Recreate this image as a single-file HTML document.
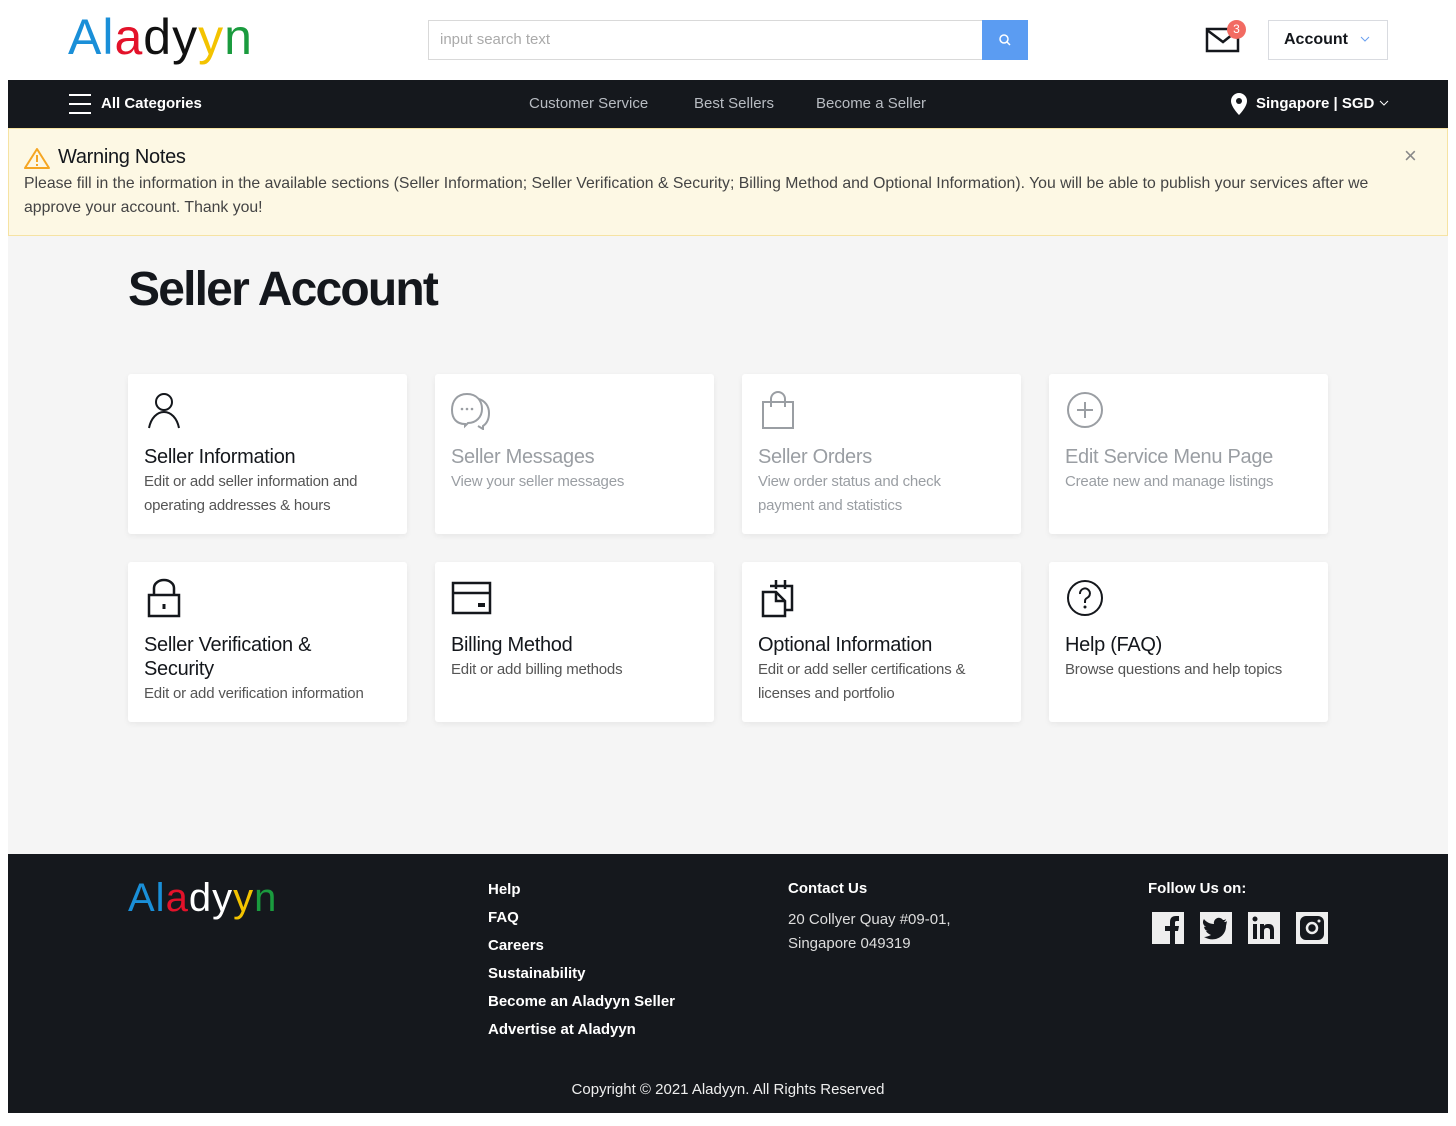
<!DOCTYPE html>
<html><head><meta charset="utf-8"><style>
*{box-sizing:border-box;margin:0;padding:0}
body{width:1456px;height:1126px;background:#fff;font-family:"Liberation Sans",sans-serif;color:#14171c;position:relative;overflow:hidden}
.abs{position:absolute}
.logo{font-size:50px;letter-spacing:1px;font-weight:400}
.hdr{left:8px;top:80px;width:1440px;height:48px;background:#15181d;color:#fff}
.main{left:8px;top:128px;width:1440px;height:726px;background:#f5f5f5}
.warn{left:8px;top:128px;width:1440px;height:108px;background:#fdf8e4;border:1px solid #f6e3a3}
.card{position:absolute;width:279px;height:160px;background:#fff;border-radius:3px;box-shadow:0 2px 6px rgba(0,0,0,.06)}
.card svg{position:absolute;left:16px;top:16px}
.card h3{position:absolute;left:16px;top:71px;font-size:20px;font-weight:400;letter-spacing:-.3px;line-height:24px}
.card p{position:absolute;left:16px;font-size:15px;line-height:24px;color:#555;letter-spacing:-.2px}
.dis h3,.dis p{color:#9a9ea3}
.foot{left:8px;top:854px;width:1440px;height:259px;background:#15181d;color:#fff}
.foot a{display:block;color:#fff;font-size:15px;font-weight:700;line-height:28px}
.soc{display:inline-block;width:32px;height:32px;background:#eee;margin-right:16px;position:relative}
</style></head><body>
<div class="abs logo" style="left:68px;top:8px"><span style="color:#1a8fd8">Al</span><span style="color:#e3122a">a</span><span style="color:#111">dy</span><span style="color:#f3c300">y</span><span style="color:#1a9b3e">n</span></div>
<div class="abs" style="left:428px;top:20px;width:555px;height:40px;border:1px solid #d9d9d9;font-size:15px;color:#aaa;padding:10px 11px">input search text</div>
<div class="abs" style="left:982px;top:20px;width:46px;height:40px;background:#5b9cf2"><svg width="46" height="40"><circle cx="22" cy="19" r="4" fill="none" stroke="#fff" stroke-width="1.5"/><path d="M25 22l3 3" stroke="#fff" stroke-width="1.5"/></svg></div>
<svg class="abs" style="left:1205px;top:26px" width="36" height="28"><rect x="2" y="3" width="31" height="22" fill="none" stroke="#14171c" stroke-width="2.5"/><path d="M2 4l16 12 15-12" fill="none" stroke="#14171c" stroke-width="2.5"/></svg>
<div class="abs" style="left:1227px;top:20px;width:19px;height:19px;border-radius:50%;background:#f26b62;color:#fff;font-size:12px;text-align:center;line-height:19px">3</div>
<div class="abs" style="left:1268px;top:20px;width:120px;height:40px;border:1px solid #d9dbe0;font-size:16px;font-weight:700;padding:10px 15px;white-space:nowrap">Account <svg style="margin-left:8px;vertical-align:2px" width="10" height="6"><path d="M1 1l4 4 4-4" fill="none" stroke="#6aa0f0" stroke-width="1"/></svg></div>
<div class="abs hdr">
 <svg class="abs" style="left:60px;top:13px" width="24" height="22"><path d="M1 2h22M1 11h22M1 20h22" stroke="#fff" stroke-width="2"/></svg>
 <div class="abs" style="left:93px;top:15px;font-size:15px;font-weight:700">All Categories</div>
 <div class="abs" style="left:521px;top:15px;font-size:15px;color:#b8bcc2">Customer Service</div>
 <div class="abs" style="left:686px;top:15px;font-size:15px;color:#b8bcc2">Best Sellers</div>
 <div class="abs" style="left:808px;top:15px;font-size:15px;color:#b8bcc2">Become a Seller</div>
 <svg class="abs" style="left:1222px;top:12px" width="18" height="24"><path d="M9 1a8 8 0 0 0-8 8c0 6 8 14 8 14s8-8 8-14a8 8 0 0 0-8-8z" fill="#fff"/><circle cx="9" cy="9" r="3" fill="#15181d"/></svg>
 <div class="abs" style="left:1248px;top:15px;font-size:15px;font-weight:700;white-space:nowrap">Singapore | SGD <svg style="vertical-align:2px" width="10" height="6"><path d="M1 1l4 4 4-4" fill="none" stroke="#fff" stroke-width="1"/></svg></div>
</div>
<div class="abs main"></div>
<div class="abs warn">
 <svg class="abs" style="left:15px;top:18px" width="26" height="22"><path d="M13 2L1 21h24z" fill="none" stroke="#f5a623" stroke-width="2" stroke-linejoin="round"/><path d="M13 8v7M13 17v2" stroke="#f5a623" stroke-width="2"/></svg>
 <div class="abs" style="left:49px;top:17px;font-size:20px;letter-spacing:-.3px">Warning Notes</div>
 <div class="abs" style="left:15px;top:43px;font-size:15.8px;line-height:24px;color:#444;white-space:nowrap">Please fill in the information in the available sections (Seller Information; Seller Verification &amp; Security; Billing Method and Optional Information). You will be able to publish your services after we<br>approve your account. Thank you!</div>
 <div class="abs" style="left:1395px;top:14px;font-size:22px;color:#888">&#215;</div>
</div>
<div class="abs" style="left:128px;top:262px;font-size:48px;font-weight:700;letter-spacing:-1.8px">Seller Account</div>

<div class="card" style="left:128px;top:374px"><svg width="40" height="40"><circle cx="20" cy="12" r="8" fill="none" stroke="#14171c" stroke-width="2"/><path d="M5 38c2-10 8-16 15-16s13 6 15 16" fill="none" stroke="#14171c" stroke-width="2"/></svg><h3>Seller Information</h3><p style="top:96px">Edit or add seller information and<br>operating addresses &amp; hours</p></div>
<div class="card dis" style="left:435px;top:374px"><svg width="40" height="40"><path d="M14 34c-8 0-13-5-13-14S6 4 16 4s15 7 15 15-6 14-14 14l-3 3z" fill="none" stroke="#9a9ea3" stroke-width="2"/><path d="M28 9c6 2 10 7 10 14s-3 11-6 13v3l-5-3" fill="none" stroke="#9a9ea3" stroke-width="2"/><circle cx="11" cy="19" r="1.3" fill="#9a9ea3"/><circle cx="16" cy="19" r="1.3" fill="#9a9ea3"/><circle cx="21" cy="19" r="1.3" fill="#9a9ea3"/></svg><h3>Seller Messages</h3><p style="top:96px">View your seller messages</p></div>
<div class="card dis" style="left:742px;top:374px"><svg width="40" height="40"><rect x="5" y="12" width="30" height="26" fill="none" stroke="#9a9ea3" stroke-width="2"/><path d="M13 17V9a7 7 0 0 1 14 0v8" fill="none" stroke="#9a9ea3" stroke-width="2"/></svg><h3>Seller Orders</h3><p style="top:96px">View order status and check<br>payment and statistics</p></div>
<div class="card dis" style="left:1049px;top:374px"><svg width="40" height="40"><circle cx="20" cy="20" r="17" fill="none" stroke="#9a9ea3" stroke-width="2"/><path d="M20 12v16M12 20h16" stroke="#9a9ea3" stroke-width="2"/></svg><h3>Edit Service Menu Page</h3><p style="top:96px">Create new and manage listings</p></div>

<div class="card" style="left:128px;top:562px"><svg width="40" height="40"><rect x="5" y="17" width="30" height="21" fill="none" stroke="#14171c" stroke-width="2.5"/><path d="M10 17V10a10 8 0 0 1 20 0v7" fill="none" stroke="#14171c" stroke-width="2.5"/><path d="M20 26v5" stroke="#14171c" stroke-width="3"/></svg><h3 style="top:71px">Seller Verification &amp;<br>Security</h3><p style="top:120px">Edit or add verification information</p></div>
<div class="card" style="left:435px;top:562px"><svg width="42" height="40"><rect x="2" y="5" width="37" height="30" fill="none" stroke="#14171c" stroke-width="2.5"/><path d="M2 15h37" stroke="#14171c" stroke-width="2.5"/><rect x="27" y="25" width="7" height="4" fill="#14171c"/></svg><h3>Billing Method</h3><p style="top:96px">Edit or add billing methods</p></div>
<div class="card" style="left:742px;top:562px"><svg width="40" height="40"><path d="M12 8h22v24h-6" fill="none" stroke="#14171c" stroke-width="2.5"/><path d="M5 14h13l9 9v15H5z" fill="none" stroke="#14171c" stroke-width="2.5"/><path d="M18 14v9h9M18 2v9M27 2v9" fill="none" stroke="#14171c" stroke-width="2.5"/></svg><h3>Optional Information</h3><p style="top:96px">Edit or add seller certifications &amp;<br>licenses and portfolio</p></div>
<div class="card" style="left:1049px;top:562px"><svg width="40" height="40"><circle cx="20" cy="20" r="17" fill="none" stroke="#14171c" stroke-width="2"/><path d="M15 16a5 5 0 1 1 7 4c-2 1-2 2-2 5" fill="none" stroke="#14171c" stroke-width="2"/><circle cx="20" cy="29" r="1.5" fill="#14171c"/></svg><h3>Help (FAQ)</h3><p style="top:96px">Browse questions and help topics</p></div>

<div class="abs foot">
 <div class="abs" style="left:120px;top:22px;font-size:40px;letter-spacing:1px"><span style="color:#1a8fd8">Al</span><span style="color:#e3122a">a</span><span style="color:#fff">dy</span><span style="color:#f3c300">y</span><span style="color:#1a9b3e">n</span></div>
 <div class="abs" style="left:480px;top:22px"><a>Help</a><a>FAQ</a><a>Careers</a><a>Sustainability</a><a>Become an Aladyyn Seller</a><a>Advertise at Aladyyn</a></div>
 <div class="abs" style="left:780px;top:26px;font-size:15px;font-weight:700">Contact Us</div>
 <div class="abs" style="left:780px;top:54px;font-size:15px;line-height:24px;color:#ddd">20 Collyer Quay #09-01,<br>Singapore 049319</div>
 <div class="abs" style="left:1140px;top:26px;font-size:15px;font-weight:700">Follow Us on:</div>
 <div class="abs" style="left:1144px;top:58px;white-space:nowrap">
  <span class="soc"><svg width="32" height="32"><path d="M18 32V19h-5v-5h5v-4c0-4 2-6 6-6h3v5h-2c-2 0-2 1-2 2v3h4l-1 5h-3v13z" fill="#15181d"/></svg></span><span class="soc"><svg width="32" height="32"><path d="M27 9c-1 1-2 1-3 1 1-1 2-2 2-3-1 1-2 1-3 1a5 5 0 0 0-9 4c-4 0-8-2-10-5-2 3-1 6 2 8-1 0-2 0-2-1 0 3 2 5 4 5h-2c1 2 3 3 5 4-2 1-5 2-7 2 10 6 22 0 22-11z" fill="#15181d"/></svg></span><span class="soc"><svg width="32" height="32"><rect x="5" y="12" width="4" height="15" fill="#15181d"/><circle cx="7" cy="7" r="2.5" fill="#15181d"/><path d="M12 12h4v2c1-2 3-2 5-2 4 0 5 3 5 6v9h-4v-8c0-2-1-3-3-3s-3 1-3 3v8h-4z" fill="#15181d"/></svg></span><span class="soc"><svg width="32" height="32"><rect x="4" y="4" width="24" height="24" rx="6" fill="#15181d"/><circle cx="16" cy="16" r="5" fill="none" stroke="#eee" stroke-width="2.5"/><circle cx="23" cy="9" r="1.5" fill="#eee"/></svg></span>
 </div>
 <div class="abs" style="left:0;width:1440px;top:227px;text-align:center;font-size:15px;color:#eee">Copyright © 2021 Aladyyn. All Rights Reserved</div>
</div>
</body></html>
